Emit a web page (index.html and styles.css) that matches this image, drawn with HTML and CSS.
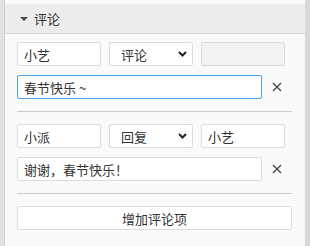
FILE: index.html
```html
<!DOCTYPE html>
<html lang="zh-CN">
<head>
  <meta charset="UTF-8">
  <title>评论</title>
  <link rel="stylesheet" href="styles.css">
</head>
<body>
  <div class="page">
    <div class="panel">
      <div class="panel-head">
        <span class="caret"></span>
        <span class="panel-title">评论</span>
      </div>

      <div class="panel-body">
        <div class="group">
          <div class="row">
            <input type="text" class="field" value="小艺">
            <select class="field pick">
              <option selected>评论</option>
              <option>回复</option>
            </select>
            <input type="text" class="field" value="" disabled>
          </div>
          <div class="row">
            <input type="text" class="field wide focus" value="春节快乐 ~">
            <button class="remove-btn" title="删除">
              <svg width="10" height="10" viewBox="0 0 10 10"><path d="M1 1L9 9M9 1L1 9" stroke="#444" stroke-width="1.3" fill="none"/></svg>
            </button>
          </div>
        </div>

        <div class="group">
          <div class="row">
            <input type="text" class="field" value="小派">
            <select class="field pick">
              <option>评论</option>
              <option selected>回复</option>
            </select>
            <input type="text" class="field" value="小艺">
          </div>
          <div class="row">
            <input type="text" class="field wide" value="谢谢，春节快乐！">
            <button class="remove-btn" title="删除">
              <svg width="10" height="10" viewBox="0 0 10 10"><path d="M1 1L9 9M9 1L1 9" stroke="#444" stroke-width="1.3" fill="none"/></svg>
            </button>
          </div>
        </div>

        <button class="add-btn">增加评论项</button>
      </div>
    </div>
  </div>
</body>
</html>
```

FILE: styles.css
```css
html, body {
  margin: 0;
  height: 100%;
}
body {
  font-family: "Noto Sans CJK SC", "Noto Sans", sans-serif;
  font-size: 13px;
  color: #333;
  background: #fafafa;
}
.page {
  height: 100%;
  border-left: 4px solid #e2e2e2;
  border-right: 5px solid #d8d8d8;
  box-sizing: border-box;
}
.panel {
  height: 100%;
  border-left: 1px solid #d0d0d0;
  padding-top: 4px;
  box-sizing: border-box;
  background: #fafafa;
}
.panel-head {
  height: 29px;
  background: #ececec;
  border-bottom: 1px solid #d4d4d4;
  display: flex;
  align-items: center;
  padding-left: 15px;
}
.caret {
  width: 0;
  height: 0;
  border-left: 4px solid transparent;
  border-right: 4px solid transparent;
  border-top: 4px solid #444;
  margin-right: 6px;
}
.panel-title {
  line-height: 1;
}
.panel-body {
  padding: 8px 13px 0 12px;
}
.group {
  display: flex;
  flex-direction: column;
  gap: 9px;
  padding-bottom: 12px;
  margin-bottom: 12px;
  border-bottom: 1px solid #cccccc;
}
.row {
  display: flex;
  gap: 8px;
  align-items: center;
}
.field {
  width: 84px;
  height: 24px;
  box-sizing: border-box;
  border: 1px solid #dcdcdc;
  border-radius: 2px;
  background: #fff;
  font-family: inherit;
  font-size: 13px;
  color: #333;
  padding: 0 6px;
  margin: 0;
  outline: none;
}
.field:disabled {
  background: #f2f2f2;
  border-color: #dadada;
}
.wide {
  width: 245px;
}
.focus {
  border-color: #4ea3ec;
}
.pick {
  appearance: none;
  -webkit-appearance: none;
  padding-left: 11px;
  background: #fff url("data:image/svg+xml;utf8,<svg xmlns='http://www.w3.org/2000/svg' width='9' height='6' viewBox='0 0 9 6'><path d='M1 1L4.5 4.5L8 1' stroke='%23222' stroke-width='2' fill='none'/></svg>") no-repeat right 5px center;
}
.remove-btn {
  width: 30px;
  height: 24px;
  margin-left: -8px;
  border: none;
  background: none;
  padding: 0;
  display: flex;
  align-items: center;
  justify-content: center;
  cursor: pointer;
}
.add-btn {
  width: 100%;
  height: 24px;
  box-sizing: border-box;
  border: 1px solid #dcdcdc;
  border-radius: 2px;
  background: #fff;
  font-family: inherit;
  font-size: 13px;
  color: #333;
  cursor: pointer;
}
```
